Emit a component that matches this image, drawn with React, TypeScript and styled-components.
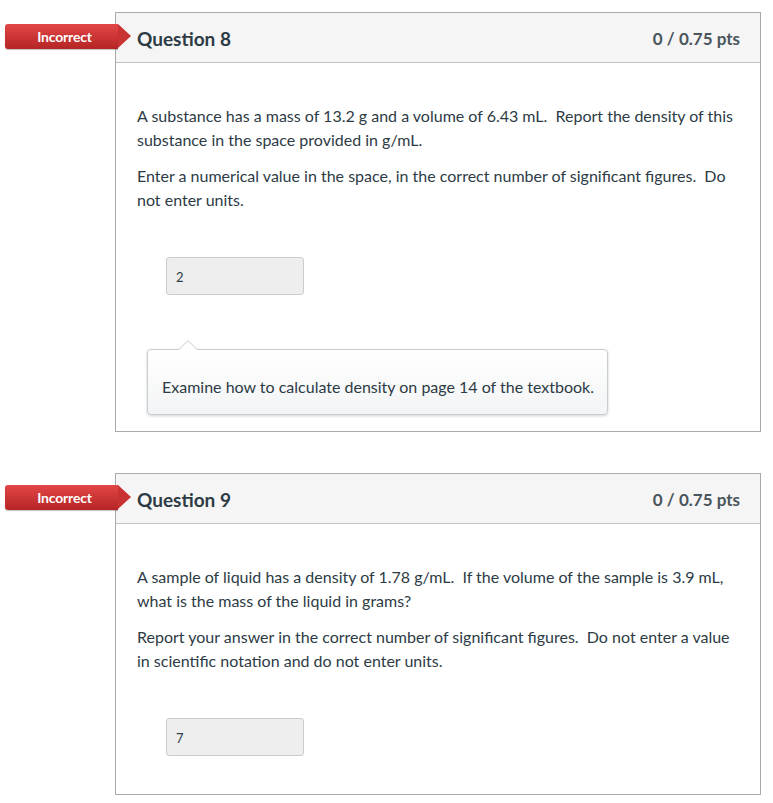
import React from "react";
import styled, { createGlobalStyle } from "styled-components";

const Global = createGlobalStyle`
  html, body { margin: 0; padding: 0; background: #ffffff; }
  body { font-family: Lato, "Open Sans", sans-serif; color: #2d3b45; }
`;

const Page = styled.div`
  padding: 12px 12px 8px 115px;
  display: flex;
  flex-direction: column;
  gap: 41px;
`;

const Card = styled.section`
  position: relative;
  border: 1px solid #aaaaaa;
  background: #fff;
`;

const Flag = styled.div`
  position: absolute;
  left: -111px;
  top: 11px;
  width: 113px;
  height: 25px;
  box-sizing: border-box;
  border-radius: 3px 0 0 3px;
  background: linear-gradient(#e34646, #b52525);
  color: #fff;
  font-weight: 700;
  font-size: 14px;
  letter-spacing: -0.2px;
  display: flex;
  align-items: center;
  justify-content: center;
  padding-left: 6px;
  box-shadow: 0 1px 1px rgba(0,0,0,0.25);
  &::after {
    content: "";
    position: absolute;
    right: -13px;
    top: 0;
    border-style: solid;
    border-width: 12.5px 0 12.5px 13px;
    border-color: transparent transparent transparent #c93232;
  }
`;

const Header = styled.header`
  height: 50px;
  background: #f5f5f5;
  border-bottom: 1px solid #c3c3c3;
  display: flex;
  align-items: center;
  justify-content: space-between;
  padding: 2px 20px 0 21px;
  box-sizing: border-box;
`;

const Title = styled.h2`
  margin: 0;
  font-size: 19px;
  font-weight: 700;
  color: #2d3b45;
`;

const Points = styled.span`
  font-size: 17px;
  font-weight: 700;
  color: #4a555d;
`;

const Body = styled.div<{ $bottom: number }>`
  padding: 41px 20px ${(p) => p.$bottom}px 21px;
`;

const Para = styled.p`
  margin: 0 0 12px;
  font-size: 16px;
  line-height: 24px;
  color: #2d3b45;
  &:last-of-type { margin-bottom: 0; }
`;

const AnswerRow = styled.div`
  margin-top: 45px;
  padding-left: 29px;
`;

const Answer = styled.div`
  width: 138px;
  height: 38px;
  box-sizing: border-box;
  background: #eeeeee;
  border: 1px solid #cccccc;
  border-radius: 3px;
  font-size: 13px;
  display: flex;
  align-items: center;
  padding: 2px 0 0 9px;
  color: #2d3b45;
`;

const Comment = styled.div`
  position: relative;
  margin: 54px 0 0 10px;
  width: 461px;
  height: 66px;
  box-sizing: border-box;
  border: 1px solid #c7cdd1;
  border-radius: 4px;
  background: linear-gradient(#ffffff, #f3f4f5);
  box-shadow: 0 1px 3px rgba(0, 0, 0, 0.18);
  font-size: 16px;
  line-height: 20px;
  padding: 27px 0 0 14px;
  color: #2d3b45;
  &::before, &::after {
    content: "";
    position: absolute;
    left: 30px;
    border-style: solid;
    border-color: transparent;
  }
  &::before {
    top: -10px;
    border-width: 0 10px 10px 10px;
    border-bottom-color: #c7cdd1;
  }
  &::after {
    top: -9px;
    left: 31px;
    border-width: 0 9px 9px 9px;
    border-bottom-color: #ffffff;
  }
`;

type Q = {
  n: number;
  paras: string[];
  answer: string;
  comment?: string;
};

const questions: Q[] = [
  {
    n: 8,
    paras: [
      "A substance has a mass of 13.2 g and a volume of 6.43 mL.\u00a0 Report the density of this substance in the space provided in g/mL.",
      "Enter a numerical value in the space, in the correct number of significant figures.\u00a0 Do not enter units.",
    ],
    answer: "2",
    comment: "Examine how to calculate density on page 14 of the textbook.",
  },
  {
    n: 9,
    paras: [
      "A sample of liquid has a density of 1.78 g/mL.\u00a0 If the volume of the sample is 3.9 mL, what is the mass of the liquid in grams?",
      "Report your answer in the correct number of significant figures.\u00a0 Do not enter a value in scientific notation and do not enter units.",
    ],
    answer: "7",
  },
];

export default function App() {
  return (
    <>
      <Global />
      <Page>
        {questions.map((q) => (
          <Card key={q.n}>
            <Flag>Incorrect</Flag>
            <Header>
              <Title>Question {q.n}</Title>
              <Points>0 / 0.75 pts</Points>
            </Header>
            <Body $bottom={q.comment ? 16 : 38}>
              {q.paras.map((p, i) => (
                <Para key={i}>{p}</Para>
              ))}
              <AnswerRow>
                <Answer>{q.answer}</Answer>
              </AnswerRow>
              {q.comment && <Comment>{q.comment}</Comment>}
            </Body>
          </Card>
        ))}
      </Page>
    </>
  );
}
